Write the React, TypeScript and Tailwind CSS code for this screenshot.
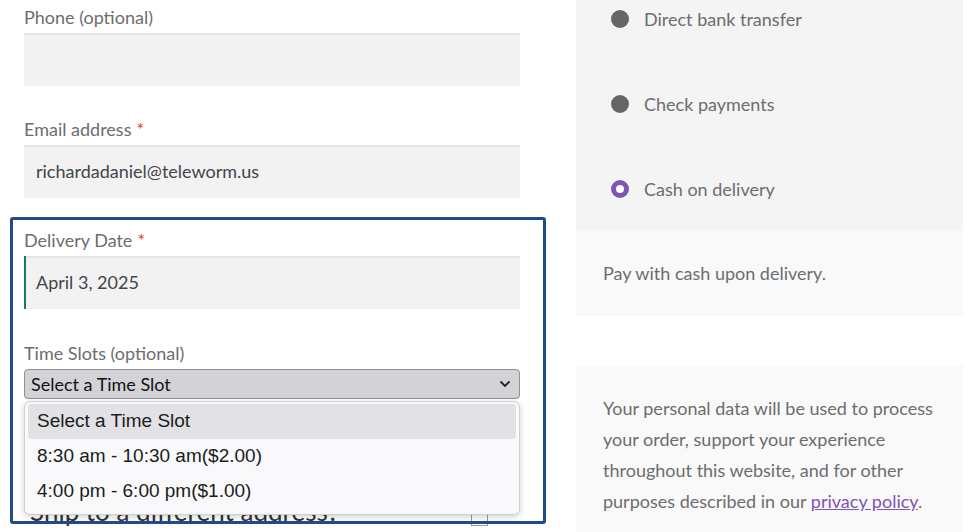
import React from "react";

const sans = { fontFamily: "Lato, 'Noto Sans', sans-serif" };

const methods = [
  { label: "Direct bank transfer", checked: false },
  { label: "Check payments", checked: false },
  { label: "Cash on delivery", checked: true },
];

const slots = ["Select a Time Slot", "8:30 am - 10:30 am($2.00)", "4:00 pm - 6:00 pm($1.00)"];

const Field = ({
  label,
  required,
  value,
  valid,
  className = "",
}: {
  label: string;
  required?: boolean;
  value?: string;
  valid?: boolean;
  className?: string;
}) => (
  <div className={className}>
    <label className="block text-[18px] leading-[27px] text-[#6d6d6d] mb-[2px]">
      {label}
      {required && <span className="text-[#e2401c] ml-[5px]">*</span>}
    </label>
    <div
      className={`h-[53px] bg-[#f2f2f2] flex items-center text-[18px] text-[#43454b] shadow-[inset_0_2px_0_rgba(0,0,0,0.05)] ${
        valid ? "border-l-2 border-[#0f834d] pl-[10px]" : "pl-[12px]"
      }`}
    >
      {value}
    </div>
  </div>
);

export default function App() {
  return (
    <div className="w-[980px] h-[532px] bg-white overflow-hidden relative flex" style={sans}>
      {/* left: billing fields */}
      <div className="w-[576px] pl-[24px] pt-[4px]">
        <div className="w-[496px]">
          <Field label="Phone (optional)" />
          <Field label="Email address" required value="richardadaniel@teleworm.us" className="mt-[30px]" />
          <Field label="Delivery Date" required value="April 3, 2025" valid className="mt-[29px]" />

          <div className="mt-[31px] relative">
            <label className="block text-[18px] leading-[27px] text-[#6d6d6d] mb-[2px]">Time Slots (optional)</label>
            <div className="h-[30px] bg-[#d3d3d7] border border-[#8f8f94] rounded-[4px] flex items-center justify-between pl-[6px] pr-[8px] text-[18px] text-[#111]">
              <span>Select a Time Slot</span>
              <svg width="12" height="8" viewBox="0 0 12 8" fill="none">
                <path d="M1.5 1.5 6 6l4.5-4.5" stroke="#222" strokeWidth="1.8" />
              </svg>
            </div>

            <div className="mt-[2px] flex items-end justify-between h-[123px]">
              <h3 className="text-[26px] leading-[32px] text-[#333] -mb-[3px] pl-[6px]">
                Ship to a different address?
              </h3>
              <span className="w-[17px] h-[20px] border border-[#999] mr-[32px] -mb-[2px]"></span>
            </div>

            {/* open select list */}
            <div
              className="absolute left-0 top-[61px] w-[496px] bg-[#f9f9fb] border border-[#cfcfd3] rounded-[6px] shadow-[0_2px_6px_rgba(0,0,0,0.18)] px-[3px] pt-[2px] pb-[5px]"
              style={{ fontFamily: "'Liberation Sans', Arial, sans-serif" }}
            >
              {slots.map((s, i) => (
                <div
                  key={s}
                  className={`h-[35px] flex items-center pl-[9px] text-[19px] text-[#1c1c1c] rounded-[3px] ${
                    i === 0 ? "bg-[#e1e1e6]" : ""
                  }`}
                >
                  {s}
                </div>
              ))}
            </div>
          </div>
        </div>
      </div>

      {/* right: payment */}
      <div className="w-[387px] flex flex-col">
        <div className="bg-[#f4f4f4] h-[231px] flex flex-col gap-[47px] pl-[35px]">
          {methods.map((m) => (
            <div key={m.label} className="h-[38px] flex items-center gap-[15px] text-[18px] text-[#6d6d6d]">
              {m.checked ? (
                <span className="w-[18px] h-[18px] rounded-full border-[5px] border-[#7f54b3] bg-white"></span>
              ) : (
                <span className="w-[18px] h-[18px] rounded-full bg-[#666]"></span>
              )}
              {m.label}
            </div>
          ))}
        </div>
        <div className="bg-[#f9f9f9] h-[85px] flex items-center pl-[27px] text-[18px] text-[#6d6d6d]">
          Pay with cash upon delivery.
        </div>
        <div className="h-[50px]"></div>
        <div className="bg-[#f9f9f9] flex-1 pl-[27px] pr-[20px] pt-[27px] text-[18px] leading-[31px] text-[#6d6d6d]">
          Your personal data will be used to process your order, support your experience throughout this website, and
          for other purposes described in our{" "}
          <a className="text-[#7f54b3] underline">privacy policy</a>.
        </div>
      </div>

      {/* highlight frame */}
      <div className="absolute left-[10px] top-[217px] w-[536px] h-[307px] border-[3px] border-[#1f4b8e] rounded-[3px] pointer-events-none"></div>
    </div>
  );
}
